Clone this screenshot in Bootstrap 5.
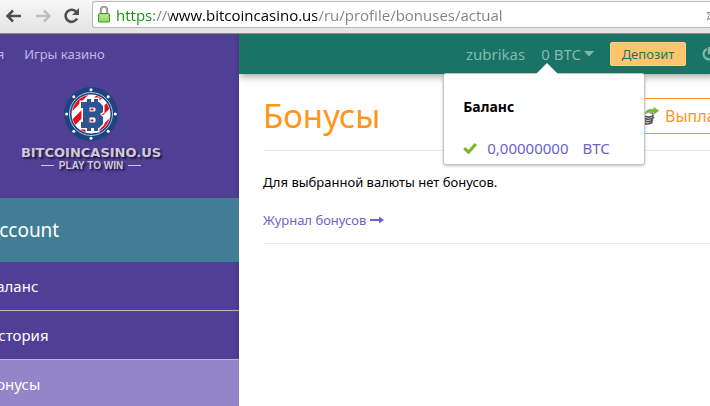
<!DOCTYPE html>
<html lang="ru">
<head>
<meta charset="utf-8">
<meta name="viewport" content="width=device-width, initial-scale=1">
<title>Бонусы</title>
<link rel="stylesheet" href="https://cdn.jsdelivr.net/npm/bootstrap@5.3.0/dist/css/bootstrap.min.css">
<script src="https://cdn.jsdelivr.net/npm/bootstrap@5.3.0/dist/js/bootstrap.bundle.min.js"></script>
<style>
body { font-family: "Noto Sans", "Open Sans", sans-serif; font-size: 13px; line-height: 20px; color: #000; background: #fff; overflow: hidden; }
a { text-decoration: none; }
svg { display: block; flex: none; }
.chrome-bar { height: 34px; padding-left: 5px; background: linear-gradient(#f7f7f7, #e4e4e4); border-bottom: 1px solid #8b8b8b; }
.chrome-btn { border: 0; background: none; padding: 0; width: 20px; margin-right: 9px; }
.omnibox { height: 27px; background: #fff; border: 1px solid #b9b9b9; border-right: 0; border-radius: 3px 0 0 3px; padding-left: 5px; margin-bottom: 3px; gap: 6px; }
.omnibox input { border: 0; outline: 0; padding: 0; min-width: 0; font-family: "Open Sans", sans-serif; font-size: 15px; line-height: 22px; color: #808080;
  background: linear-gradient(90deg, #0a930a 0 38px, #808080 38px 54px, #000 54px 201px, #808080 201px) text; -webkit-background-clip: text; -webkit-text-fill-color: transparent; }
.side { width: 239px; background: #504095; overflow: hidden; box-shadow: inset -4px 0 5px -4px rgba(0,0,0,.25); }
.side-top { height: 48px; margin-left: -47px; gap: 20px; white-space: nowrap; padding-bottom: 7px; }
.side-top a { color: #c3b4ee; }
.brand { width: 182px; height: 116px; padding-top: 4px; color: #cfcad3; font-family: "DejaVu Sans", sans-serif; font-weight: 700; text-shadow: 2px 2px 2px rgba(20,10,50,.8); }
.brand-name { font-size: 13px; line-height: 14px; margin-top: 4px; }
.brand-tag { font-family: "Liberation Sans", sans-serif; font-size: 10px; line-height: 12px; gap: 5px; }
.brand-tag i { width: 13px; height: 1px; background: #cfcad3; }
.side-head { height: 64px; background: #417e96; font-size: 19px; line-height: 28px; color: #fff; }
.side-head span, .side-link span { margin-left: -13px; }
.side-link { height: 49px; font-size: 15px; line-height: 24px; color: #fff; border-bottom: 1px solid #bbb7bb; }
.side-link.current { background: #9385c8; }
.topbar { height: 40px; background: #197466; box-shadow: 0 2px 8px rgba(0,0,0,.4); margin-right: -6px; gap: 16px; z-index: 2; }
.topbar a, .topbar .plain { color: #83b8af; font-size: 15px; line-height: 20px; }
.topbar .plain { border: 0; background: none; padding: 0; gap: 3px; }
.btn-deposit { --bs-btn-bg: #ffc56e; --bs-btn-color: #197466; --bs-btn-border-color: #ffd07e; --bs-btn-hover-bg: #ffc56e; height: 24px; width: 76px; padding: 0; border-radius: 2px; font-size: 13px; line-height: 20px; }
.pop { top: 100%; left: -98px; width: 202px; height: 92px; margin-top: 9px; padding: 22px 19px 0; background: #fff; border: 1px solid #c4c4c8; border-radius: 3px; box-shadow: 0 1px 3px rgba(0,0,0,.25); white-space: nowrap; color: #000; }
.pop-tip { position: absolute; top: -11px; left: 91px; }
.pop h2 { font-size: 14px; line-height: 22px; font-weight: 700; margin: 0 0 19px; }
.pop-row { font-size: 15px; line-height: 22px; color: #6a63cb; gap: 10px; }
.sheet { padding-left: 24px; }
.title-row { height: 77px; border-bottom: 1px solid #ebebeb; padding-top: 8px; }
h1 { font-size: 33px; line-height: 44px; color: #ff9619; font-weight: 400; margin: 0; }
.btn-pay { --bs-btn-color: #ff9619; --bs-btn-border-color: #ff9619; --bs-btn-bg: #fff; width: 130px; height: 36px; margin-right: -58px; padding: 0 0 0 3px; border-radius: 3px; gap: 5px; font-size: 16px; line-height: 24px; }
.note { margin: 21px 0 18px; }
.log { padding-bottom: 13px; border-bottom: 1px solid #ebebeb; }
.log a { color: #6a63cb; gap: 4px; }
</style>
</head>
<body class="vh-100 d-flex flex-column">
<header class="chrome-bar d-flex align-items-center">
  <button class="chrome-btn" type="button" aria-label="Назад"><svg width="18" height="16" viewBox="0 0 18 16" fill="none" stroke="#505050" stroke-width="2.6"><path d="M2.5 8H16M8 2.5 2.5 8 8 13.5"/></svg></button>
  <button class="chrome-btn" type="button" aria-label="Вперёд"><svg width="18" height="16" viewBox="0 0 18 16" fill="none" stroke="#c2c2c2" stroke-width="2.6"><path d="M2 8H15M10 2.5 15.5 8 10 13.5"/></svg></button>
  <button class="chrome-btn" type="button" aria-label="Обновить"><svg width="18" height="16" viewBox="0 0 18 16"><path d="M13 3.7A6 6 0 1 0 14 10.5" fill="none" stroke="#505050" stroke-width="2.6"/><path d="M16 0v7H9z" fill="#505050"/></svg></button>
  <div class="omnibox d-flex align-items-center flex-fill">
    <svg width="12" height="17" viewBox="0 0 12 17"><path d="M2.8 8V4a3.2 3.2 0 0 1 6.4 0v4" fill="none" stroke="#777" stroke-width="2"/><path d="M2.8 8V4a3.2 3.2 0 0 1 6.4 0v4" fill="none" stroke="#ddd" stroke-width=".7"/><rect x=".5" y="7.5" width="11" height="8.5" rx="1" fill="#9bdb69" stroke="#3f9135"/><path d="M1.5 9h9M1.5 11h9" stroke="#c3efa0"/></svg>
    <input class="flex-fill" type="text" aria-label="Адрес" value="https://www.bitcoincasino.us/ru/profile/bonuses/actual">
    <svg width="4" height="18" viewBox="0 0 4 18"><path d="M4 6.5H.8L4 9.5M2.6 10 1.5 14 4 12.5" fill="none" stroke="#888"/></svg>
  </div>
</header>
<div class="d-flex flex-fill overflow-hidden">
  <aside class="side flex-shrink-0">
    <nav class="side-top d-flex align-items-center"><a href="#">Главная</a><a href="#">Игры казино</a></nav>
    <div class="brand d-flex flex-column align-items-center">
      <svg width="56" height="56" viewBox="0 0 56 56">
        <defs><clipPath id="disc"><circle cx="28" cy="28" r="19"/></clipPath></defs>
        <circle cx="28" cy="28" r="27" fill="#1d4380"/><circle cx="28" cy="28" r="21.5" fill="#1d4380" stroke="#b9c4dc"/><circle cx="28" cy="28" r="19.5" fill="#fff"/>
        <g clip-path="url(#disc)" stroke="#e60f18" stroke-width="6"><path d="M-4 34 34-4M4 43 43 4M13 52 52 13M22 61 61 22"/></g>
        <path d="M18 16h6v-3h4v3h3v-3h4v3h1l4 4v6l-3 2 3 3v7l-4 4h-1v3h-4v-3h-3v3h-4v-3h-6v-6h2V22h-2z" fill="#2c5392" stroke="#fff" stroke-width="3" paint-order="stroke"/>
        <path d="M26.500 21.500h5l1 1v2l-1 1h-5zM26.500 31.500h5l1 1v3l-1 1h-5z" fill="#fff"/><path d="M27.500 22.500h3v2h-3zM27.500 33.500h3v2h-3z" fill="#e60f18"/>
        <g fill="#fff"><circle cx="28" cy="3.7" r="1.5"/><circle cx="28" cy="52.3" r="1.5"/><circle cx="3.7" cy="28" r="1.5"/><circle cx="52.3" cy="28" r="1.5"/><circle cx="10.8" cy="10.8" r="1.5"/><circle cx="45.2" cy="10.8" r="1.5"/><circle cx="10.8" cy="45.2" r="1.5"/><circle cx="45.2" cy="45.2" r="1.5"/></g>
      </svg>
      <div class="brand-name">BITCOINCASINO.US</div>
      <div class="brand-tag d-flex align-items-center"><i></i>PLAY TO WIN<i></i></div>
    </div>
    <div class="side-head d-flex align-items-center"><span>Account</span></div>
    <nav>
      <a class="side-link d-flex align-items-center" href="#"><span>Баланс</span></a>
      <a class="side-link d-flex align-items-center" href="#"><span>История</span></a>
      <a class="side-link current d-flex align-items-center" href="#"><span>Бонусы</span></a>
    </nav>
  </aside>
  <main class="flex-fill overflow-hidden">
    <div class="topbar d-flex align-items-center justify-content-end position-relative">
      <a href="#">zubrikas</a>
      <div class="position-relative">
        <button class="plain d-flex align-items-center" type="button" aria-expanded="true">0 BTC<svg width="10" height="6" viewBox="0 0 10 6"><path d="M0 0h10L5 5.5z" fill="#83b8af"/></svg></button>
        <section class="pop position-absolute">
          <svg class="pop-tip" width="24" height="12" viewBox="0 0 24 12"><path d="M0 12 12 0l12 12z" fill="#fff"/></svg>
          <h2>Баланс</h2>
          <div class="pop-row d-flex align-items-center"><svg width="14" height="12" viewBox="0 0 14 12"><path d="m1.3 6.2 4.2 4L12.8 2" fill="none" stroke="#7cb530" stroke-width="3.2"/></svg><span>0,00000000</span><span class="ms-1">BTC</span></div>
        </section>
      </div>
      <button class="btn btn-deposit" type="button">Депозит</button>
      <a href="#" aria-label="Выход"><svg width="14" height="14" viewBox="0 0 14 14" fill="none" stroke="#83b8af" stroke-width="2.2" stroke-linecap="round"><path d="M4 2.5a5.4 5.4 0 1 0 6 0M7 1v5.5"/></svg></a>
    </div>
    <div class="sheet">
      <div class="title-row d-flex align-items-center justify-content-between">
        <h1>Бонусы</h1>
        <button class="btn btn-pay d-flex align-items-center" type="button"><svg width="18" height="20" viewBox="1 0 19 20"><g fill="none" stroke="#555" stroke-width="1.8"><ellipse cx="8" cy="8.5" rx="5" ry="2.6"/><path d="M2.5 11c1 3 9 3.500 11 0M2 13.500c1 3 9 3.500 10.500 0M2 16c1 3 8 3.500 10 0"/></g><path d="M4 9c0-5 3-7 9-6.500V0l6.500 4.500L13 9V6.200C8.500 5.500 6 6.500 4 9z" fill="#7cb530" stroke="#fff" stroke-width=".5"/></svg>Выплата</button>
      </div>
      <p class="note">Для выбранной валюты нет бонусов.</p>
      <div class="log d-flex"><a class="d-flex align-items-center" href="#">Журнал бонусов<svg width="14" height="8" viewBox="0 0 14 8"><path d="M0 3h9V.5L14 4 9 7.500V5H0z" fill="#6a63cb"/></svg></a></div>
    </div>
  </main>
</div>
</body>
</html>
